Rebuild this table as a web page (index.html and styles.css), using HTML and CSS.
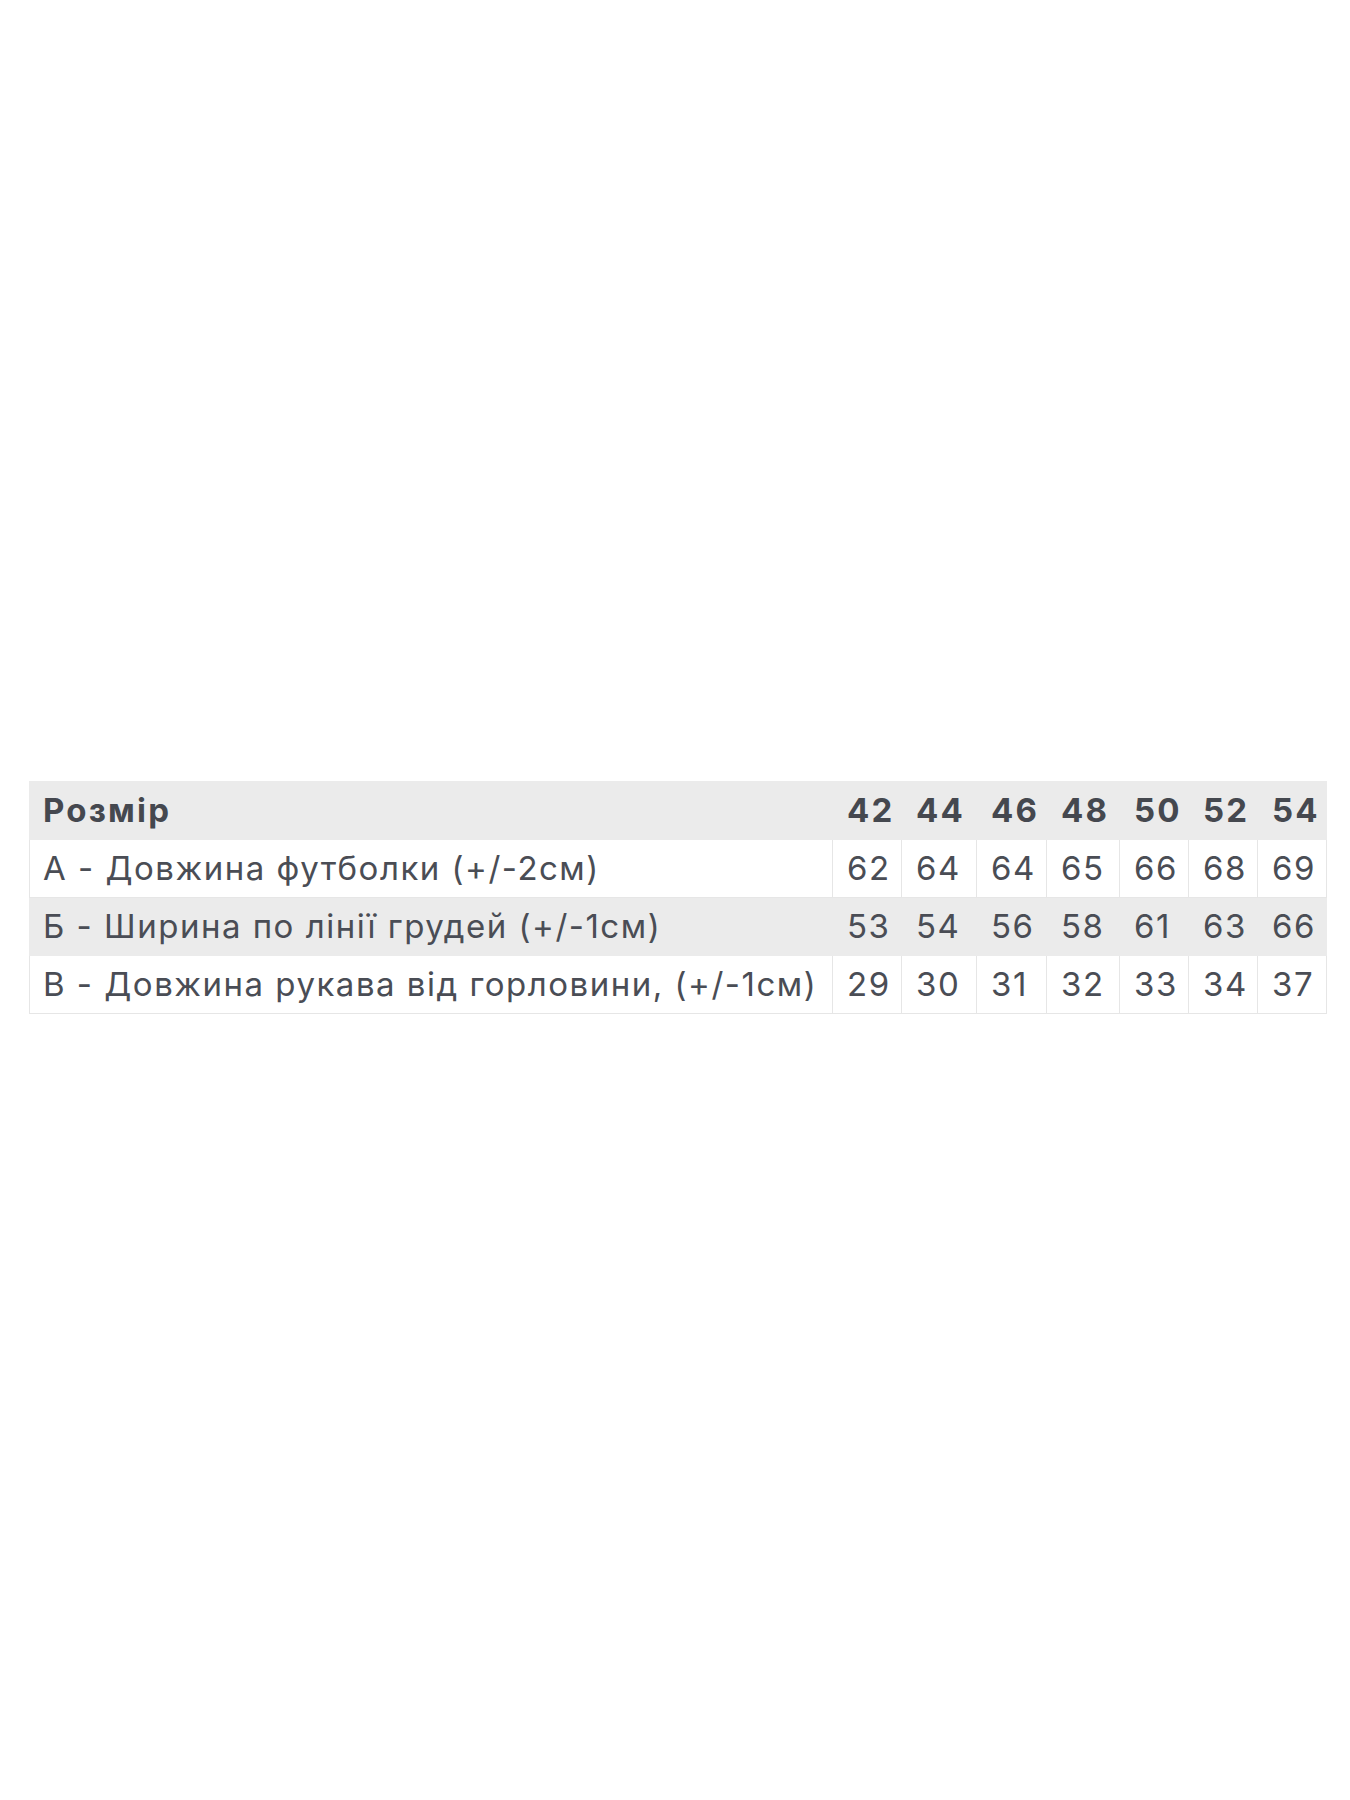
FILE: index.html
```html
<!DOCTYPE html>
<html lang="uk">
<head>
<meta charset="utf-8">
<title>Розмірна сітка</title>
<link rel="stylesheet" href="styles.css">
</head>
<body>
<main class="page">
  <table class="sizes">
    <colgroup>
      <col class="c-label">
      <col class="c-n c-69">
      <col class="c-n c-75">
      <col class="c-n c-70">
      <col class="c-n c-73">
      <col class="c-n c-69">
      <col class="c-n c-69">
      <col class="c-n c-69">
    </colgroup>
    <thead>
      <tr class="head">
        <th>Розмір</th><th>42</th><th>44</th><th>46</th><th>48</th><th>50</th><th>52</th><th>54</th>
      </tr>
    </thead>
    <tbody>
      <tr class="light">
        <td>А - Довжина футболки (+/-2см)</td><td>62</td><td>64</td><td>64</td><td>65</td><td>66</td><td>68</td><td>69</td>
      </tr>
      <tr class="grey">
        <td>Б - Ширина по лінії грудей (+/-1см)</td><td>53</td><td>54</td><td>56</td><td>58</td><td>61</td><td>63</td><td>66</td>
      </tr>
      <tr class="light">
        <td>В - Довжина рукава від горловини, (+/-1см)</td><td>29</td><td>30</td><td>31</td><td>32</td><td>33</td><td>34</td><td>37</td>
      </tr>
    </tbody>
  </table>
</main>
</body>
</html>
```
FILE: styles.css
```css
html, body {
  margin: 0;
  padding: 0;
  background: #ffffff;
}
.page {
  padding: 781px 0 0 29px;
}
.sizes {
  border-collapse: collapse;
  table-layout: fixed;
  width: 1297px;
  font-family: "Inter", "Open Sans", sans-serif;
  font-size: 33px;
  color: #4a4d55;
  letter-spacing: 1.5px;
}
.c-label { width: 803px; }
.c-69 { width: 69px; }
.c-70 { width: 70px; }
.c-73 { width: 73px; }
.c-75 { width: 75px; }
.sizes th,
.sizes td {
  height: 58px;
  padding: 0 0 0 14px;
  text-align: left;
  vertical-align: middle;
  white-space: nowrap;
  border: 1px solid #e6e6e6;
  box-sizing: border-box;
  line-height: 1;
}
.sizes th:first-child,
.sizes td:first-child {
  padding-left: 13px;
}
.sizes th {
  font-weight: 700;
  color: #45484f;
  letter-spacing: 2.2px;
}
.head th {
  background: #ebebeb;
  border-color: #ebebeb;
}
.grey td {
  background: #ebebeb;
  border-color: #ebebeb;
}
.light td {
  background: #ffffff;
}
```
